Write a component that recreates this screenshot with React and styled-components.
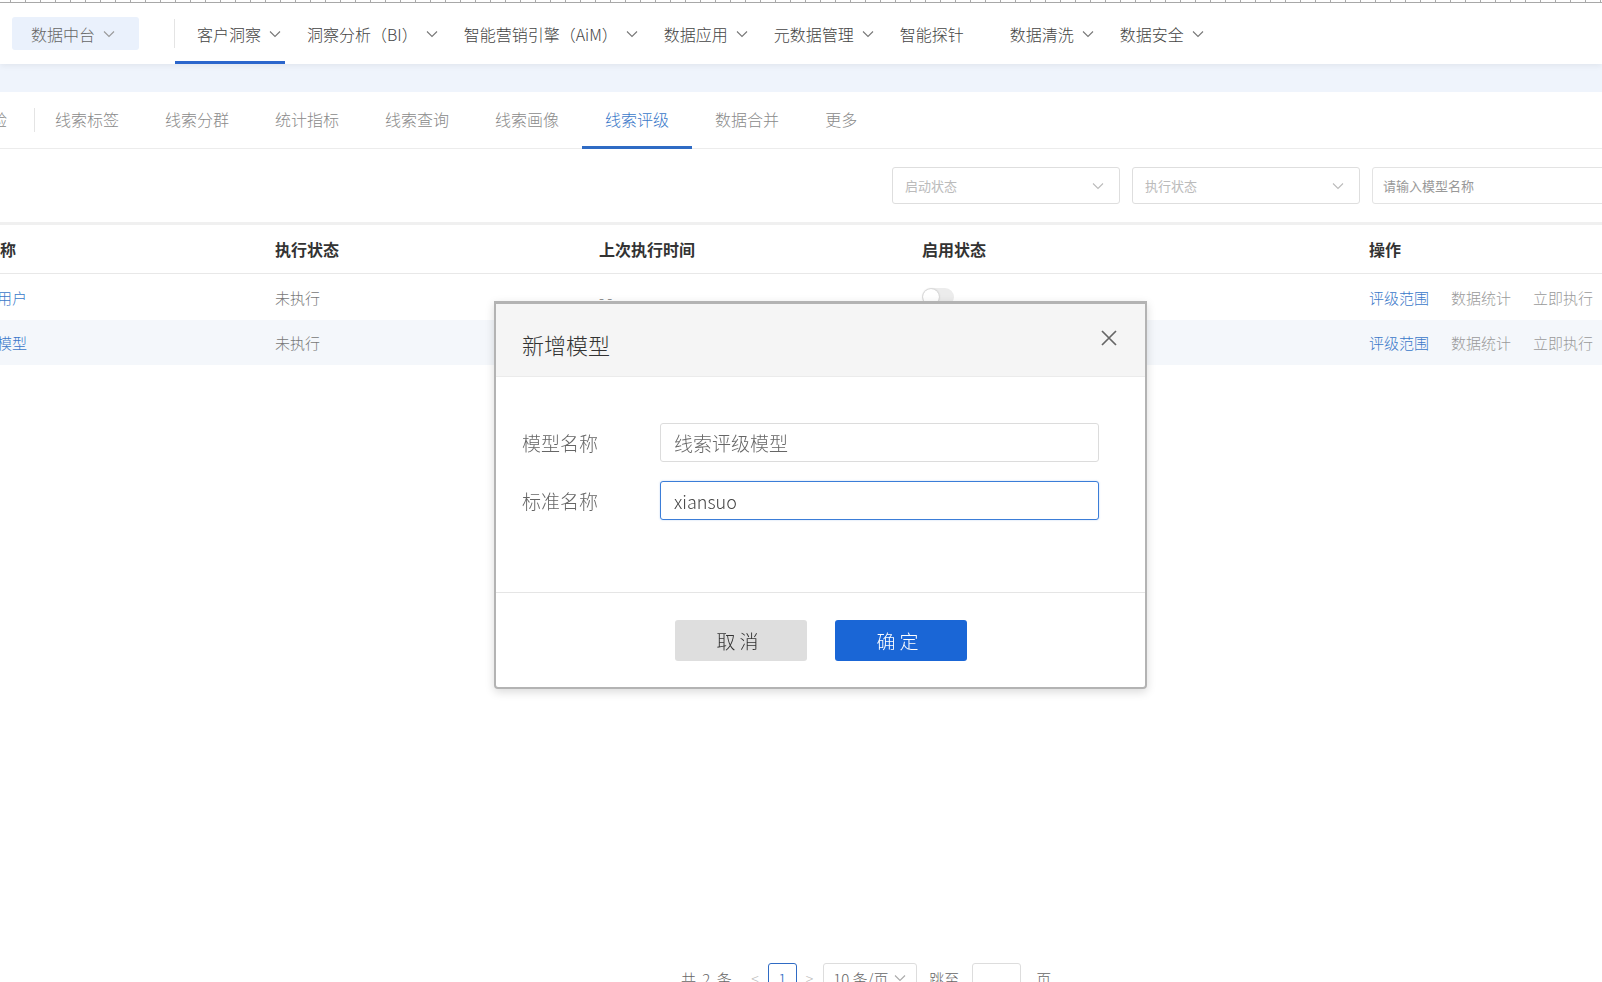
import React from 'react'
import styled, { createGlobalStyle } from 'styled-components'

const GlobalStyle = createGlobalStyle`
  html, body {
    margin: 0;
    padding: 0;
  }
  body {
    font-family: "Noto Sans CJK SC", "Noto Sans", sans-serif;
    background: #fff;
    overflow: hidden;
  }
  * {
    box-sizing: border-box;
  }
`
const Page = styled.div`
  width: 1602px;
  height: 982px;
  display: flex;
  flex-direction: column;
  overflow: hidden;
`
const Ruler = styled.div`
  height: 3px;
  flex-shrink: 0;
  background:
    linear-gradient(#aaa, #aaa) left bottom / 100% 1px no-repeat,
    repeating-linear-gradient(90deg, transparent 0 10px, #aaa 10px 11px, transparent 11px 15px);
`
const Nav = styled.div`
  height: 61px;
  flex-shrink: 0;
  display: flex;
  align-items: center;
  padding-left: 12px;
  background: #fff;
  box-shadow: 0 2px 6px rgba(0,0,0,.06);
  position: relative;
  z-index: 1;
`
const Platform = styled.div`
  width: 127px;
  height: 33px;
  background: #eaf1fc;
  border-radius: 3px;
  display: flex;
  align-items: center;
  padding-left: 19px;
  gap: 8px;
  font-size: 16px;
  font-weight: 300;
  color: #666;
`
const NavSep = styled.div`
  width: 1px;
  height: 29px;
  background: #e4e4e4;
  margin-left: 35px;
`
const NavItem = styled.div`
  height: 100%;
  display: flex;
  align-items: center;
  gap: 8px;
  padding: 3px 4px 0 22px;
  font-size: 16px;
  font-weight: 300;
  color: #444;
  border-bottom: 3px solid ${props=>props.$active?'#2b66cc':'transparent'};
  white-space: nowrap;
`
const Chevron = styled.svg`
  width: 12px;
  height: 8px;
  flex-shrink: 0;
  visibility: ${props=>props.$hidden?'hidden':'visible'};
`
const Band = styled.div`
  height: 28px;
  flex-shrink: 0;
  background: #eff4fc;
`
const Main = styled.div`
  flex: 1;
  overflow: hidden;
  position: relative;
`
const Inner = styled.div`
  margin-left: -80px;
  width: 1800px;
  height: 100%;
  display: flex;
  flex-direction: column;
`
const Tabs = styled.div`
  height: 57px;
  display: flex;
  align-items: stretch;
  border-bottom: 1px solid #ececec;
`
const Tab = styled.div`
  display: flex;
  align-items: center;
  padding: 0 23px 1px;
  margin-bottom: -1px;
  font-size: 16px;
  font-weight: 300;
  color: ${props=>props.$active?'#3a78c9':'#8a8a8a'};
  border-bottom: 3px solid ${props=>props.$active?'#2f6bc4':'transparent'};
  white-space: nowrap;
`
const TabSep = styled.div`
  width: 1px;
  height: 24px;
  align-self: center;
  background: #e4e4e4;
  margin: 0 -3px 0 4px;
`
const FilterBar = styled.div`
  display: flex;
  justify-content: flex-end;
  gap: 12px;
  padding: 18px 48px 18px 0;
  border-bottom: 3px solid #f0f0f0;
`
const Select = styled.div`
  width: 228px;
  height: 37px;
  border: 1px solid #dedede;
  border-radius: 3px;
  display: flex;
  align-items: center;
  justify-content: space-between;
  padding: 0 15px 0 12px;
  font-size: 13px;
  color: #bbb;
`
const Search = styled.input`
  width: 300px;
  height: 37px;
  border: 1px solid #e3e3e3;
  border-radius: 3px;
  padding: 0 10px;
  font-family: inherit;
  font-size: 13px;
  outline: none;
  &::placeholder {
    color: #999;
  }
`
const Row = styled.div`
  display: grid;
  grid-template-columns: 323px 324px 323px 447px 1fr;
  align-items: center;
  padding-left: 32px;
  height: ${props=>props.$h}px;
  background: ${props=>props.$bg||'#fff'};
  border-bottom: ${props=>props.$head?'1px solid #e8e8e8':'none'};
  font-size: ${props=>props.$head?16:15}px;
  font-weight: ${props=>props.$head?700:300};
  color: ${props=>props.$head?'#333':'#777'};
`
const NameLink = styled.span`
  color: #3a78c9;
`
const Toggle = styled.div`
  width: 32px;
  height: 18px;
  border-radius: 9px;
  background: #ececec;
  position: relative;
  &::after {
    content: '';
    position: absolute;
    left: 1px;
    top: 1px;
    width: 16px;
    height: 16px;
    border-radius: 50%;
    background: #fff;
    box-shadow: 0 0 2px rgba(0,0,0,.3);
  }
`
const Ops = styled.div`
  display: flex;
  gap: 22px;
`
const Op = styled.span`
  color: ${props=>props.$primary?'#3a78c9':'#9a9a9a'};
`
const Pager = styled.div`
  margin-top: auto;
  margin-bottom: -12px;
  height: 32px;
  display: flex;
  align-items: center;
  padding-left: 761px;
  font-size: 15px;
  font-weight: 300;
  color: #666;
`
const Total = styled.span`
  letter-spacing: 1.5px;
`
const Arrow = styled.span`
  color: #bbb;
  font-size: 14px;
  margin: 0 ${props=>props.$mr}px 0 ${props=>props.$ml}px;
`
const PageBox = styled.div`
  width: 29px;
  height: 30px;
  border: 1px solid #2f6bc4;
  border-radius: 3px;
  color: #2f6bc4;
  display: flex;
  align-items: center;
  justify-content: center;
`
const SizeSelect = styled.div`
  width: 94px;
  height: 30px;
  border: 1px solid #ddd;
  border-radius: 3px;
  display: flex;
  align-items: center;
  gap: 6px;
  padding-left: 9px;
`
const JumpLabel = styled.span`
  margin-left: 12px;
`
const JumpBox = styled.div`
  width: 49px;
  height: 30px;
  border: 1px solid #ddd;
  border-radius: 3px;
  margin: 0 15px 0 13px;
`
const Modal = styled.div`
  position: fixed;
  left: 494px;
  top: 301px;
  width: 653px;
  background: #fff;
  border: 2px solid #b3b3b3;
  border-top-width: 3px;
  border-radius: 0 0 4px 4px;
  box-shadow: 0 3px 10px rgba(0,0,0,.15);
  display: flex;
  flex-direction: column;
  z-index: 10;
`
const ModalHeader = styled.div`
  height: 73px;
  background: #f5f5f5;
  border-bottom: 1px solid #ebebeb;
  display: flex;
  justify-content: space-between;
  padding: 0 26px;
`
const ModalTitle = styled.div`
  font-size: 22px;
  font-weight: 300;
  color: #333;
  padding-top: 24px;
`
const CloseIcon = styled.svg`
  width: 18px;
  height: 18px;
  margin-top: 25px;
  margin-right: 1px;
`
const ModalBody = styled.div`
  height: 215px;
  padding: 46px 46px 0 26px;
  display: flex;
  flex-direction: column;
  gap: 19px;
`
const FormRow = styled.div`
  display: flex;
  align-items: center;
`
const Label = styled.div`
  width: 138px;
  font-size: 19px;
  font-weight: 300;
  color: #666;
`
const Field = styled.input`
  width: 439px;
  height: 39px;
  border: 1px solid ${props=>props.$focus?'#3b7dd8':'#dcdcdc'};
  border-radius: 3px;
  padding: 0 13px;
  font-family: inherit;
  font-size: ${props=>props.$size}px;
  font-weight: 300;
  color: ${props=>props.$focus?'#444':'#666'};
  caret-color: #222;
  outline: none;
  box-shadow: ${props=>props.$focus?'0 0 2px rgba(59,125,216,.35)':'none'};
`
const ModalFooter = styled.div`
  height: 95px;
  border-top: 1px solid #e5e5e5;
  display: flex;
  justify-content: center;
  align-items: flex-start;
  padding-top: 27px;
  gap: 28px;
`
const Button = styled.button`
  width: 132px;
  height: 41px;
  border: none;
  border-radius: 3px;
  font-family: inherit;
  font-size: 19px;
  font-weight: 300;
  letter-spacing: 4px;
  padding-left: 4px;
  background: ${props=>props.$bg};
  color: ${props=>props.$c};
`

function Down({hidden,color}) {
  return (
    <Chevron viewBox="0 0 12 8" $hidden={hidden}>
      <polyline points="1,1.5 6,6.5 11,1.5" fill="none" stroke={color||'#777'} strokeWidth="1.1"/>
    </Chevron>
  )
}

const navs=[
  {t:'客户洞察',active:true},
  {t:'洞察分析（BI）'},
  {t:'智能营销引擎（AiM）'},
  {t:'数据应用'},
  {t:'元数据管理'},
  {t:'智能探针',noArrow:true},
  {t:'数据清洗'},
  {t:'数据安全'},
]
const tabs=['线索标签','线索分群','统计指标','线索查询','线索画像','线索评级','数据合并','更多']
const rows=[
  {name:'高意向用户',status:'未执行',time:'- -'},
  {name:'线索分模型',status:'未执行',time:'- -'},
]

function App() {
  return (
    <Page>
      <GlobalStyle/>
      <Ruler/>
      <Nav>
        <Platform>数据中台<Down color="#999"/></Platform>
        <NavSep/>
        {navs.map((n,i)=>(
          <NavItem key={i} $active={n.active}>{n.t}<Down hidden={n.noArrow}/></NavItem>
        ))}
      </Nav>
      <Band/>
      <Main>
        <Inner>
          <Tabs>
            <Tab>线索检验</Tab>
            <TabSep/>
            {tabs.map((t,i)=>(
              <Tab key={i} $active={t==='线索评级'}>{t}</Tab>
            ))}
          </Tabs>
          <FilterBar>
            <Select>启动状态<Down color="#bbb"/></Select>
            <Select>执行状态<Down color="#bbb"/></Select>
            <Search placeholder="请输入模型名称"/>
          </FilterBar>
          <Row $head $h={49}>
            <div>模型名称</div>
            <div>执行状态</div>
            <div>上次执行时间</div>
            <div>启用状态</div>
            <div>操作</div>
          </Row>
          {rows.map((r,i)=>(
            <Row key={i} $h={i===0?46:45} $bg={i===1?'#f4f7fb':'#fff'}>
              <NameLink>{r.name}</NameLink>
              <div>{r.status}</div>
              <div>{r.time}</div>
              <div><Toggle/></div>
              <Ops>
                <Op $primary>评级范围</Op>
                <Op>数据统计</Op>
                <Op>立即执行</Op>
              </Ops>
            </Row>
          ))}
          <Pager>
            <Total>共 2 条</Total>
            <Arrow $ml={18} $mr={9}>&lt;</Arrow>
            <PageBox>1</PageBox>
            <Arrow $ml={9} $mr={10}>&gt;</Arrow>
            <SizeSelect>10 条/页<Down color="#aaa"/></SizeSelect>
            <JumpLabel>跳至</JumpLabel>
            <JumpBox/>
            页
          </Pager>
        </Inner>
      </Main>
      <Modal>
        <ModalHeader>
          <ModalTitle>新增模型</ModalTitle>
          <CloseIcon viewBox="0 0 18 18">
            <path d="M2 2 L16 16 M16 2 L2 16" stroke="#666" strokeWidth="1.7" fill="none"/>
          </CloseIcon>
        </ModalHeader>
        <ModalBody>
          <FormRow>
            <Label>模型名称</Label>
            <Field $size={19} defaultValue="线索评级模型"/>
          </FormRow>
          <FormRow>
            <Label>标准名称</Label>
            <Field $size={18} $focus autoFocus defaultValue="xiansuo"/>
          </FormRow>
        </ModalBody>
        <ModalFooter>
          <Button $bg={'#dedede'} $c={'#333'}>取消</Button>
          <Button $bg={'#1a66d6'} $c={'#fff'}>确定</Button>
        </ModalFooter>
      </Modal>
    </Page>
  )
}

export default App
